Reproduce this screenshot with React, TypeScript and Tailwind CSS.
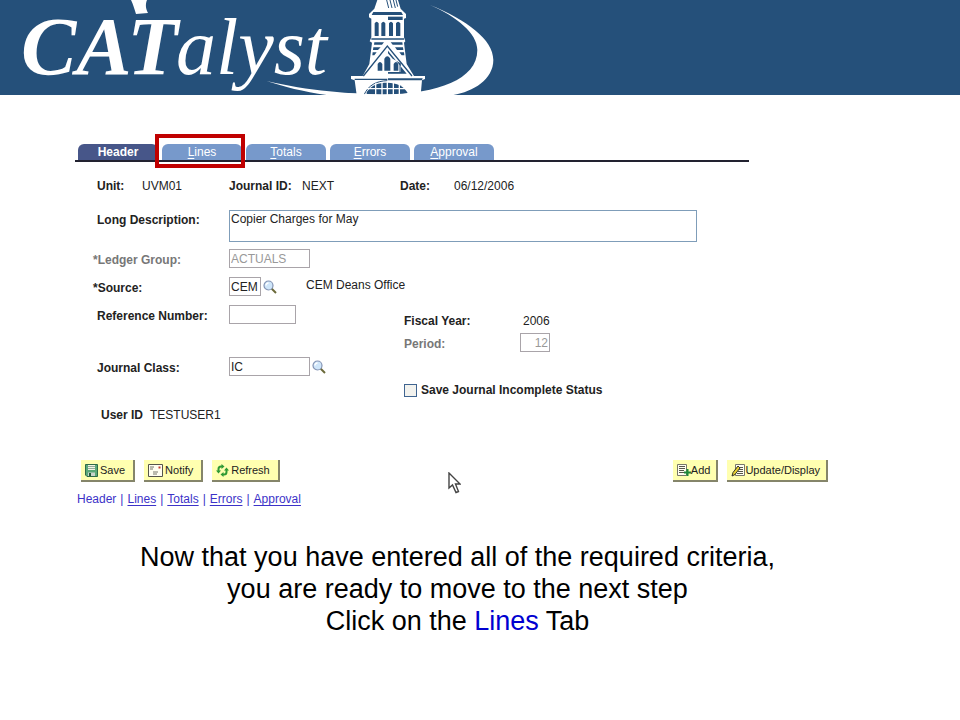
import type { ReactNode } from "react"

const TABS = [
  { key: "H", rest: "eader", active: true },
  { key: "L", rest: "ines", marked: true },
  { key: "T", rest: "otals" },
  { key: "E", rest: "rrors" },
  { key: "A", rest: "pproval" },
]

const FOOTER_LINKS = ["Lines", "Totals", "Errors", "Approval"]

function Logo() {
  return (
    <svg viewBox="0 0 500 95" className="block h-[95px] w-[500px]" role="img" aria-label="CATalyst">
      <g fill="#fff">
        <text x="21" y="74" fontFamily="'Liberation Serif', serif" fontSize="83" fontWeight="bold" fontStyle="italic">CAT</text>
        <text x="176" y="74" fontFamily="'Liberation Serif', serif" fontSize="80" fontStyle="italic">alyst</text>
        <path d="M131 0H147C145 5 146 9 148 13L136 14C134 8 133 4 131 0Z" />
      </g>
      {/* swoosh */}
      <g transform="translate(260 0) scale(0.33333)">
        <path fill="#fff" d="M510 15C620 60 700 118 700 180C700 238 640 275 580 285H200C130 275 70 260 20 243C140 272 280 283 380 283C530 280 652 240 652 150C652 100 590 50 510 15Z" />
        {/* steeple */}
        <path fill="#fff" d="M352 0H414L422 26L438 42V54L432 56V112L436 124L432 128L440 192L462 228H495V237L486 241L482 285H290L284 241L273 237V228H308L328 192L336 128L329 124L334 112V56L327 52V42L343 26Z" />
        <g fill="none" stroke="#25507a" strokeWidth="3">
          <path d="M380 0L386 24M390 0L396 24M400 0L406 24M408 0L413 20" />
          <path d="M334 117H432" strokeWidth="4" />
          <path d="M284 238H382" strokeWidth="4" />
          <path d="M310 228L382 138L456 228" strokeWidth="4" />
          <path d="M392 218H420V190" />
          <path d="M312 285C325 255 350 243 382 242" />
        </g>
        <g fill="#25507a">
          <path d="M340 36H424L429 45H335Z" />
          <path d="M384 50H428V60H384Z" />
          <path d="M344 108V70Q350 60 356 70V108ZM364 108V70Q370 60 376 70V108ZM387 108V70Q393 60 399 70V108ZM408 108V70Q414 60 421 70V108Z" />
          <path d="M343 127H372L366 134H342ZM340 142H362L354 150H339ZM338 157H350L343 166H337ZM392 127H427L428 134H398ZM405 142H429L430 150H411ZM418 157H432L433 166H425Z" />
          <path d="M353 212V192Q360 180 367 192V212ZM373 212V176Q382 162 391 176V212ZM401 212V192Q408 180 415 192V212Z" />
          <path d="M384 152L440 221H384V216H422V190L398 176L384 160Z" />
          <path d="M384 235H488L486 241H384Z" />
          <path d="M320 276C335 255 355 248 382 248C410 248 432 258 443 279C410 284 360 284 320 282Z" />
        </g>
        <g stroke="#fff" strokeWidth="4" fill="none">
          <path d="M347 250V285M366 246V285M382 244V285M400 246V285M418 250V285M320 266H442" />
        </g>
        <path fill="#fff" d="M260 279C420 290 520 282 590 250L580 285H200Z" />
      </g>
    </svg>
  )
}

function Magnifier() {
  return (
    <svg viewBox="0 0 14 14" className="h-3.5 w-3.5" aria-hidden="true">
      <path d="M8.5 8.5L13 13" stroke="#6b6a3a" strokeWidth="2" />
      <circle cx="5.5" cy="5.5" r="4.5" fill="#cfe6fa" stroke="#8494b4" strokeWidth="1.2" />
      <path d="M3 5.5A2.5 2.5 0 0 1 5.5 3" stroke="#fff" strokeWidth="1.4" fill="none" />
    </svg>
  )
}

function SaveIcon() {
  return (
    <svg viewBox="0 0 13 13" className="h-[13px] w-[13px]" aria-hidden="true">
      <path d="M.5 .5H12.5V12.5H2L.5 11Z" fill="#5aa878" stroke="#2f6a48" />
      <path d="M3 1H10V6H3Z" fill="#f4f4e4" />
      <path d="M3 2.5H10M3 4.5H10" stroke="#7a9a86" strokeWidth=".8" />
      <path d="M3 8.5H10V12H3Z" fill="#c9d4cc" />
      <path d="M4 9H6V12H4Z" fill="#245c3a" />
    </svg>
  )
}

function NotifyIcon() {
  return (
    <svg viewBox="0 0 15 13" className="h-[13px] w-[15px]" aria-hidden="true">
      <path d="M.5 .5H14.5V12.5H.5Z" fill="#fffef0" stroke="#55554a" />
      <path d="M2 3H6M2 5H5M5 8H10M5 10H9" stroke="#77776a" />
      <path d="M10.5 2.5H12.5V4.5H10.5Z" fill="#c43c2c" />
    </svg>
  )
}

function RefreshIcon() {
  return (
    <svg viewBox="0 0 13 13" className="h-[13px] w-[13px]" aria-hidden="true">
      <g fill="none" stroke="#2f9a34" strokeWidth="2">
        <path d="M2.5 8V5Q2.5 2.5 5 2.5H6" />
        <path d="M10.5 5V8Q10.5 10.5 8 10.5H7" />
      </g>
      <path d="M5.5 0L8.5 2.5L5.5 5ZM7.5 8V13L4.5 10.5ZM0 6.5H5L2.5 9.5ZM8 6.5H13L10.5 3.5Z" fill="#2f9a34" />
    </svg>
  )
}

function AddIcon() {
  return (
    <svg viewBox="0 0 14 13" className="h-[13px] w-3.5" aria-hidden="true">
      <path d="M.5 .5H9.5V11.5H.5Z" fill="#fffef0" stroke="#77776a" />
      <path d="M2 2.5H8M2 4.5H8M2 6.5H7M2 8.5H7" stroke="#55554a" />
      <path d="M10.5 5V12M7 8.5H14" stroke="#1f8a3a" strokeWidth="2" />
    </svg>
  )
}

function UpdateIcon() {
  return (
    <svg viewBox="0 0 14 13" className="h-[13px] w-3.5" aria-hidden="true">
      <path d="M4.5 .5H13.5V11.5H4.5Z" fill="#fffef0" stroke="#77776a" />
      <path d="M8 3.5H12M8 5.5H12M7 7.5H12M6 9.5H12" stroke="#55554a" />
      <path d="M1 12L2 8.5L7 2L9 4L4 10.5Z" fill="#e8d030" stroke="#33332a" />
    </svg>
  )
}

function ActionButton({ icon, tight, children }: { icon: ReactNode; tight?: boolean; children: ReactNode }) {
  return (
    <button
      type="button"
      className={`flex h-[22px] items-center border-r-2 border-b-2 border-[#85856a] bg-[#ffffb0] pl-1 text-[11px] text-[#222] ${tight ? "pr-1.5" : "gap-0.5 pr-2"}`}
    >
      {icon}
      {children}
    </button>
  )
}

export default function App() {
  const label = "mr-1 w-[132px] shrink-0 pl-1 font-bold"
  const box = "h-[19px] border border-[#a9a4a9] bg-white px-px outline-none"

  return (
    <div className="min-h-screen bg-white font-['Liberation_Sans',Arial,sans-serif] text-xs text-[#222]">
      <header className="bg-[#25507a]">
        <Logo />
      </header>

      <main className="mr-[120px] ml-[75px] pt-[49px]">
        <nav className="mr-[91px] flex gap-1 border-b-2 border-[#222230] pl-[3px]">
          {TABS.map(t => (
            <div key={t.key} className="relative">
              <button
                type="button"
                className={
                  t.active
                    ? "h-4 w-20 rounded-t-md bg-[#475689] font-bold text-white"
                    : "h-4 w-20 rounded-t-md bg-[#7799cb] text-white"
                }
              >
                {t.active ? "Header" : <><span className="underline underline-offset-2">{t.key}</span>{t.rest}</>}
              </button>
              {t.marked && <div className="pointer-events-none absolute -top-2.5 -left-[7px] h-[34px] w-[90px] border-4 border-[#c00000]" />}
            </div>
          ))}
        </nav>

        <form className="pl-[18px]" onSubmit={e => e.preventDefault()}>
          <div className="mt-4 flex h-4 items-center">
            <span className="w-[49px] pl-1 font-bold">Unit:</span>
            <span className="w-[87px]">UVM01</span>
            <span className="w-[73px] font-bold">Journal ID:</span>
            <span className="w-[98px]">NEXT</span>
            <span className="w-[54px] font-bold">Date:</span>
            <span>06/12/2006</span>
          </div>

          <div className="mt-4 flex">
            <label htmlFor="desc" className={`${label} pt-0.5`}>Long Description:</label>
            <textarea
              id="desc"
              defaultValue="Copier Charges for May"
              className="h-8 w-[468px] resize-none border border-[#7f9db9] px-px outline-none"
            />
          </div>

          <div className="mt-[7px] grid grid-cols-[311px_1fr]">
            <div className="space-y-[9px]">
              <div className="flex items-end">
                <label htmlFor="ledger" className="w-[136px] shrink-0 font-bold text-[#777]">*Ledger Group:</label>
                <input id="ledger" disabled defaultValue="ACTUALS" className={`${box} w-[81px] text-[#999]`} />
              </div>
              <div className="flex items-end whitespace-nowrap">
                <label htmlFor="source" className="w-[136px] shrink-0 font-bold">*Source:</label>
                <input id="source" defaultValue="CEM" className={`${box} w-8`} />
                <button type="button" aria-label="Look up source" className="ml-0.5 shrink-0 self-center"><Magnifier /></button>
                <span className="ml-[29px] self-start">CEM Deans Office</span>
              </div>
              <div className="flex items-end">
                <label htmlFor="ref" className={label}>Reference Number:</label>
                <input id="ref" className={`${box} w-[67px]`} />
              </div>
              <div className="flex items-end pt-6">
                <label htmlFor="jclass" className={label}>Journal Class:</label>
                <input id="jclass" defaultValue="IC" className={`${box} w-[81px]`} />
                <button type="button" aria-label="Look up journal class" className="ml-0.5 self-center"><Magnifier /></button>
              </div>
              <div className="flex gap-[7px] pt-[22px] pl-2">
                <span className="font-bold">User ID</span>
                <span>TESTUSER1</span>
              </div>
            </div>

            <div className="pt-16">
              <div className="flex items-center">
                <span className="w-[119px] font-bold">Fiscal Year:</span>
                <span>2006</span>
              </div>
              <div className="mt-1 flex items-end">
                <label htmlFor="period" className="w-[116px] font-bold text-[#777]">Period:</label>
                <input id="period" disabled defaultValue="12" className={`${box} w-[30px] text-right text-[#999]`} />
              </div>
              <div className="mt-[30px] flex items-center gap-1">
                <input id="incomplete" type="checkbox" className="h-[13px] w-[13px] appearance-none border border-[#3f6490] bg-[#f2f2ee] checked:bg-[#3f6490]" />
                <label htmlFor="incomplete" className="font-bold">Save Journal Incomplete Status</label>
              </div>
            </div>
          </div>
        </form>

        <div className="relative mt-[37px] mr-3 ml-1.5 flex gap-[9px]">
          <ActionButton icon={<SaveIcon />}>Save</ActionButton>
          <ActionButton icon={<NotifyIcon />}>Notify</ActionButton>
          <ActionButton icon={<RefreshIcon />}>Refresh</ActionButton>
          <div className="ml-auto flex gap-[9px]">
            <ActionButton tight icon={<AddIcon />}>Add</ActionButton>
            <ActionButton tight icon={<UpdateIcon />}>Update/Display</ActionButton>
          </div>
          {/* mouse pointer */}
          <svg viewBox="0 0 13 22" className="absolute top-3 left-[367px] h-[22px] w-[13px]" aria-hidden="true">
            <path d="M1 1V16L4.5 13L8 20.5L10.5 19.5L7.5 12H12Z" fill="#fff" stroke="#444" strokeWidth="1.4" />
          </svg>
        </div>

        <div className="mt-[9px] flex gap-1 pl-0.5 text-[#3c32c8]">
          <span>Header</span>
          {FOOTER_LINKS.map(name => (
            <span key={name} className="flex gap-1">
              <span>|</span>
              <a href="#" className="underline underline-offset-2">{name}</a>
            </span>
          ))}
        </div>

        <div className="mt-[34px] text-center text-[27px] leading-8 text-black">
          <p>Now that you have entered all of the required criteria,</p>
          <p>you are ready to move to the next step</p>
          <p>Click on the <span className="text-[#0000d0]">Lines</span> Tab</p>
        </div>
      </main>
    </div>
  )
}
